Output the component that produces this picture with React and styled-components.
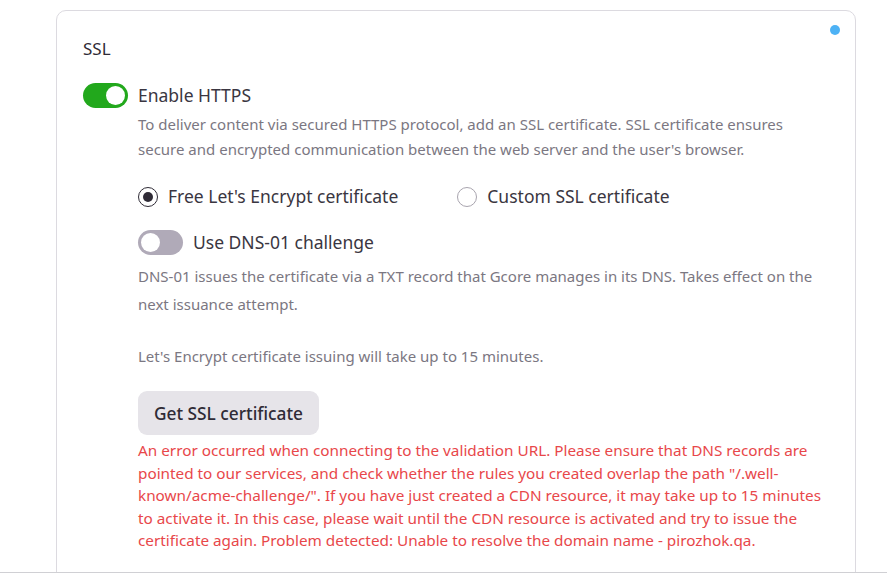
import React from 'react';
import styled, { createGlobalStyle } from 'styled-components';

const GlobalStyle = createGlobalStyle`
  html, body { margin: 0; padding: 0; background: #fff; }
  body { font-family: "Noto Sans", sans-serif; overflow: hidden; }
`;

const Page = styled.div`
  width: 887px;
  height: 573px;
  overflow: hidden;
  padding: 10px 31px 0 56px;
  box-sizing: border-box;
  border-bottom: 1px solid #d0d0d4;
`;

const Card = styled.section`
  position: relative;
  height: 600px;
  box-sizing: border-box;
  border: 1px solid #dcdae0;
  border-radius: 10px;
  padding: 26px 26px 0;
`;

const Dot = styled.span`
  position: absolute;
  top: 14px;
  right: 15px;
  width: 10px;
  height: 10px;
  border-radius: 50%;
  background: #4db2f5;
`;

const Heading = styled.h2`
  margin: 0 0 22px;
  font-size: 17px;
  line-height: 24px;
  font-weight: 400;
  color: #2f2b36;
`;

const ToggleRow = styled.div`
  display: flex;
  align-items: center;
  gap: 10px;
`;

const Track = styled.span`
  position: relative;
  width: 45px;
  height: 25px;
  border-radius: 13px;
  background: ${(p) => (p.$on ? '#22a81c' : '#b0aab8')};
`;

const Knob = styled.span`
  position: absolute;
  top: 3px;
  left: ${(p) => (p.$on ? '23px' : '3px')};
  width: 19px;
  height: 19px;
  border-radius: 50%;
  background: #fff;
`;

const Label = styled.span`
  margin-top: -1px;
  font-size: 17.5px;
  line-height: 24px;
  white-space: nowrap;
  color: #3a3641;
`;

const Body = styled.div`
  padding: 4px 0 0 55px;
`;

const Hint = styled.p`
  margin: ${(p) => p.$margin || '0'};
  font-size: 15px;
  line-height: ${(p) => p.$lineHeight || '25px'};
  color: #7b7782;
`;

const RadioRow = styled.div`
  display: flex;
  gap: 59px;
  margin: 23px 0 22px;
`;

const RadioItem = styled.label`
  display: flex;
  align-items: center;
  gap: 10px;
`;

const RadioMark = styled.span`
  display: flex;
  align-items: center;
  justify-content: center;
  box-sizing: border-box;
  width: 20px;
  height: 20px;
  border-radius: 50%;
  border: ${(p) => (p.$on ? '1.5px solid #2f2b36' : '1px solid #a8a4ae')};
  &::after {
    content: '';
    display: ${(p) => (p.$on ? 'block' : 'none')};
    width: 10px;
    height: 10px;
    border-radius: 50%;
    background: #2f2b36;
  }
`;

const Button = styled.button`
  display: block;
  width: 181px;
  height: 44px;
  margin-top: 22px;
  padding: 0;
  border: 0;
  border-radius: 9px;
  background: #e6e4e9;
  font: 500 17.3px "Noto Sans", sans-serif;
  color: #2f2b36;
`;

const ErrorText = styled.p`
  margin: 4px 0 0;
  font-size: 15.3px;
  line-height: 22.5px;
  white-space: nowrap;
  color: #e8474a;
`;

export default function App() {
  return (
    <Page>
      <GlobalStyle />
      <Card>
        <Dot />
        <Heading>SSL</Heading>
        <ToggleRow>
          <Track $on><Knob $on /></Track>
          <Label>Enable HTTPS</Label>
        </ToggleRow>
        <Body>
          <Hint>
            To deliver content via secured HTTPS protocol, add an SSL certificate. SSL certificate ensures<br />
            secure and encrypted communication between the web server and the user's browser.
          </Hint>
          <RadioRow>
            <RadioItem><RadioMark $on /><Label>Free Let's Encrypt certificate</Label></RadioItem>
            <RadioItem><RadioMark /><Label>Custom SSL certificate</Label></RadioItem>
          </RadioRow>
          <ToggleRow>
            <Track><Knob /></Track>
            <Label>Use DNS-01 challenge</Label>
          </ToggleRow>
          <Hint $margin="7px 0 0" $lineHeight="28px">
            DNS-01 issues the certificate via a TXT record that Gcore manages in its DNS. Takes effect on the<br />
            next issuance attempt.
          </Hint>
          <Hint $margin="26px 0 0">Let's Encrypt certificate issuing will take up to 15 minutes.</Hint>
          <Button>Get SSL certificate</Button>
          <ErrorText>
            An error occurred when connecting to the validation URL. Please ensure that DNS records are<br />
            pointed to our services, and check whether the rules you created overlap the path "/.well-<br />
            known/acme-challenge/". If you have just created a CDN resource, it may take up to 15 minutes<br />
            to activate it. In this case, please wait until the CDN resource is activated and try to issue the<br />
            certificate again. Problem detected: Unable to resolve the domain name - pirozhok.qa.
          </ErrorText>
        </Body>
      </Card>
    </Page>
  );
}
